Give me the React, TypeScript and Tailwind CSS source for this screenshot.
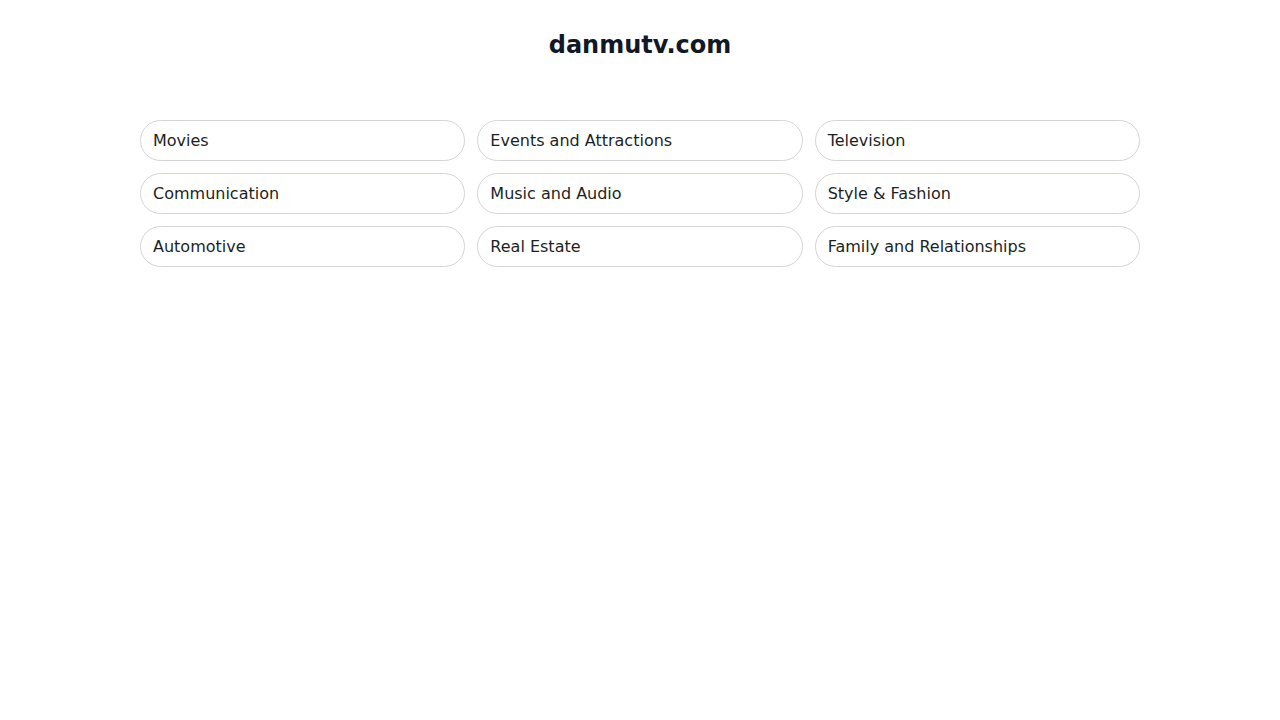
import React from 'react'

const topics = [
  'Movies',
  'Events and Attractions',
  'Television',
  'Communication',
  'Music and Audio',
  'Style & Fashion',
  'Automotive',
  'Real Estate',
  'Family and Relationships',
]

export default function App() {
  return (
    <div className="min-h-screen bg-white font-['DejaVu_Sans',sans-serif] text-gray-900">
      <div className="mx-auto w-[1000px] pt-[29px]">
        <h1 className="text-center text-2xl leading-8 font-bold text-[#111827]">danmutv.com</h1>

        <div className="mt-[59px] grid grid-cols-3 gap-3">
          {topics.map((t) => (
            <a
              key={t}
              href="#"
              className="flex h-[41px] items-center rounded-full border border-[#d4d4d8] px-3 text-base text-[#1c1f24]"
            >
              {t}
            </a>
          ))}
        </div>
      </div>
    </div>
  )
}
